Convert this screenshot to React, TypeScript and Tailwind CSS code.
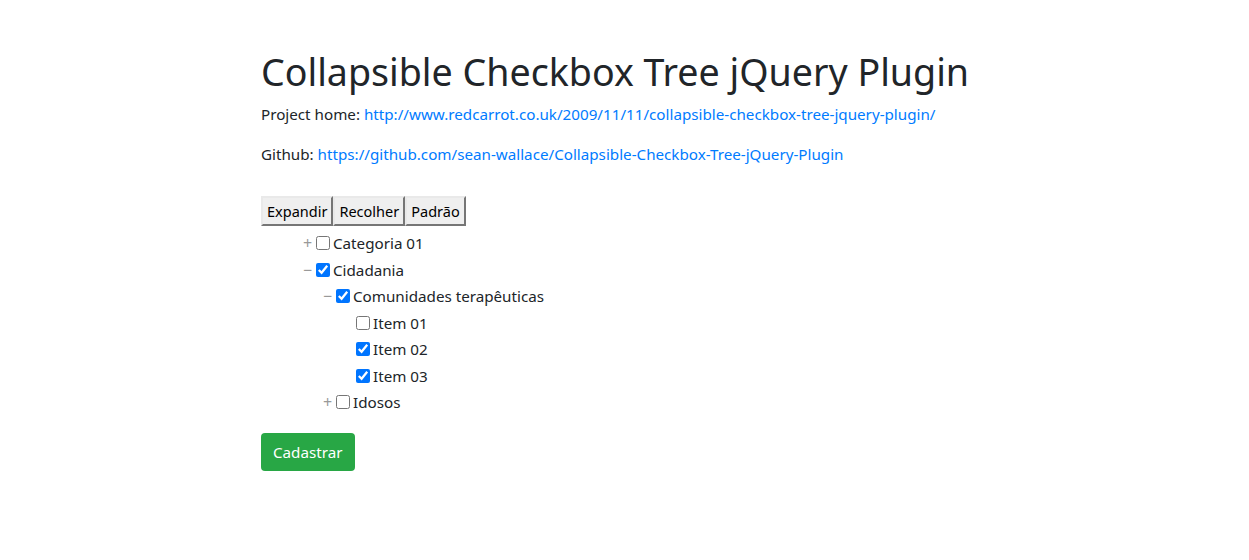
import { useState } from 'react';

type Node = {
  label: string;
  checked?: boolean;
  open?: boolean;
  children?: Node[];
};

const TREE: Node[] = [
  { label: 'Categoria 01', open: false, children: [{ label: 'Sub 01' }] },
  {
    label: 'Cidadania',
    checked: true,
    open: true,
    children: [
      {
        label: 'Comunidades terapêuticas',
        checked: true,
        open: true,
        children: [
          { label: 'Item 01' },
          { label: 'Item 02', checked: true },
          { label: 'Item 03', checked: true },
        ],
      },
      { label: 'Idosos', open: false, children: [{ label: 'Item 04' }] },
    ],
  },
];

function TreeItem({ node }: { node: Node }) {
  const [open, setOpen] = useState(!!node.open);
  const hasKids = !!node.children?.length;

  return (
    <li>
      <div className="flex h-[26.5px] items-center">
        <span
          onClick={() => hasKids && setOpen(!open)}
          className="w-[15px] shrink-0 cursor-pointer select-none pr-[2px] text-center text-[16px] leading-none text-[#999]"
        >
          {hasKids ? (open ? '−' : '+') : ''}
        </span>
        <input
          type="checkbox"
          defaultChecked={node.checked}
          className="m-0 mr-[3px] h-[14px] w-[14px] accent-[#0075ff]"
        />
        <span>{node.label}</span>
      </div>
      {hasKids && open && (
        <ul className="pl-[20px]">
          {node.children!.map((c) => (
            <TreeItem key={c.label} node={c} />
          ))}
        </ul>
      )}
    </li>
  );
}

const btn =
  'border-2 border-[#767676] border-l-[#e9e9e9] border-t-[#e9e9e9] bg-[#efefef] px-[4px] h-[30px] text-[14.5px] leading-none text-black';

export default function App() {
  return (
    <div className="min-h-screen bg-white pl-[261px] pt-[48px] text-[15.2px] leading-6 text-[#212529] [font-family:'Noto_Sans',sans-serif]">
      <h1 className="mb-[6px] text-[37.6px] font-normal leading-[48px]">
        Collapsible Checkbox Tree jQuery Plugin
      </h1>
      <p className="mb-4">
        Project home:{' '}
        <a href="#" className="text-[#007bff]">
          http://www.redcarrot.co.uk/2009/11/11/collapsible-checkbox-tree-jquery-plugin/
        </a>
      </p>
      <p className="mb-4">
        Github:{' '}
        <a href="#" className="text-[#007bff]">
          https://github.com/sean-wallace/Collapsible-Checkbox-Tree-jQuery-Plugin
        </a>
      </p>

      <form className="pt-[14px]">
        <div className="flex">
          <button type="button" className={btn}>Expandir</button>
          <button type="button" className={btn}>Recolher</button>
          <button type="button" className={btn}>Padrão</button>
        </div>
        <ul className="mt-[4px] pl-[40px]">
          {TREE.map((n) => (
            <TreeItem key={n.label} node={n} />
          ))}
        </ul>
        <button
          type="button"
          className="mt-[17px] h-[38px] rounded-[4px] bg-[#28a745] px-3 text-white"
        >
          Cadastrar
        </button>
      </form>
    </div>
  );
}
